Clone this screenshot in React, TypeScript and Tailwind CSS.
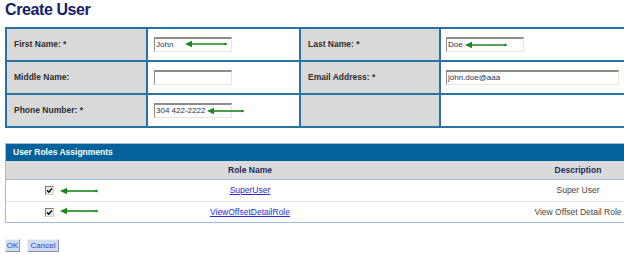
import { ReactElement } from "react"

type ArrowProps = { left: number; top: number; width: number }

// green annotation arrow pointing left, laid over the form
const Arrow = ({ left, top, width }: ArrowProps): ReactElement => (
  <svg
    className="absolute pointer-events-none"
    style={{ left, top }}
    width={width}
    height={8}
    viewBox={`0 0 ${width} 8`}
  >
    <line x1={5} y1={4} x2={width - 1.5} y2={4} stroke="#18881c" strokeWidth={1.6} />
    <polygon points="0,4 7,0.8 7,7.2" fill="#18881c" />
    <circle cx={width - 1.5} cy={4} r={1.3} fill="#18881c" />
  </svg>
)

const Label = ({ text }: { text: string }): ReactElement => (
  <div className="flex items-center h-[31px] bg-[#d9d9d9] pl-[7px] text-[8.5px] font-bold text-[#2e2e2e]">
    {text}
  </div>
)

const Field = ({ value, width }: { value: string; width: number }): ReactElement => (
  <div
    className="h-[15px] bg-white border border-[#e9e6da] border-t-2 border-t-[#8d8c85] border-l-[#8d8c85] pl-[1px] text-[8px] leading-[11px] text-[#2c2f52] overflow-visible whitespace-nowrap"
    style={{ width }}
  >
    {value}
  </div>
)

const Checkbox = (): ReactElement => (
  <span className="flex items-center justify-center w-[9px] h-[9px] border border-[#7a7a74] border-r-[#d8d6cc] border-b-[#d8d6cc] bg-[#ececE6]">
    <svg width="7" height="7" viewBox="0 0 7 7">
      <path d="M1 3.4 L2.8 5.2 L6 1.4" fill="none" stroke="#111" strokeWidth={1.5} />
    </svg>
  </span>
)

const App = (): ReactElement => {
  return (
    <div className="w-[624px] h-[255px] overflow-hidden bg-white font-['Liberation_Sans',Arial,sans-serif]">
      <h1 className="pl-[5px] h-[20px] text-[16px] leading-[20px] font-bold tracking-[-0.4px] text-[#14206a]">
        Create User
      </h1>

      <div className="ml-[5px] mt-[7px] w-[625px] grid grid-cols-[139px_151px_138px_1fr] gap-[2px] bg-[#2a72a3] p-[2px]">
        <Label text="First Name: *" />
        <div className="relative flex items-center h-[31px] bg-white pl-[6px]">
          <Field value="John" width={78} />
          <Arrow left={37} top={11} width={42} />
        </div>
        <Label text="Last Name: *" />
        <div className="relative flex items-center h-[31px] bg-white pl-[5px]">
          <Field value="Doe" width={78} />
          <Arrow left={24} top={12} width={42} />
        </div>

        <Label text="Middle Name:" />
        <div className="flex items-center h-[31px] bg-white pl-[6px]">
          <Field value="" width={78} />
        </div>
        <Label text="Email Address: *" />
        <div className="flex items-center h-[31px] bg-white pl-[5px]">
          <Field value="john.doe@aaa" width={173} />
        </div>

        <Label text="Phone Number: *" />
        <div className="relative flex items-center h-[31px] bg-white pl-[6px]">
          <Field value="304 422-2222" width={78} />
          <Arrow left={59} top={12} width={37} />
        </div>
        <div className="h-[31px] bg-[#d9d9d9]" />
        <div className="h-[31px] bg-white" />
      </div>

      <div className="ml-[5px] mt-[15px] w-[747px] border border-[#9cbcd9]">
        <div className="flex items-center h-[17px] bg-[#03619b] pl-[7px] text-[8.5px] font-bold text-white">
          User Roles Assignments
        </div>
        <div className="grid grid-cols-[89px_310px_1fr] h-[19px] items-center bg-[#dadada] border-b border-[#9cbcd9] text-[8.5px] font-bold text-[#1d2a5c]">
          <span />
          <span className="text-center">Role Name</span>
          <span className="text-center">Description</span>
        </div>
        <div className="grid grid-cols-[89px_310px_1fr] h-[22px] items-center border-b border-[#e2e2e2] text-[8.5px]">
          <div className="relative flex items-center h-full pl-[39px]">
            <Checkbox />
            <Arrow left={54} top={7} width={38} />
          </div>
          <a href="#" className="text-center text-[#2a2ad8] underline">SuperUser</a>
          <span className="text-center text-[#454545]">Super User</span>
        </div>
        <div className="grid grid-cols-[89px_310px_1fr] h-[20px] items-center text-[8.5px]">
          <div className="relative flex items-center h-full pl-[39px]">
            <Checkbox />
            <Arrow left={54} top={5} width={38} />
          </div>
          <a href="#" className="text-center text-[#2a2ad8] underline">ViewOffsetDetailRole</a>
          <span className="text-center text-[#454545]">View Offset Detail Role</span>
        </div>
      </div>

      <div className="flex gap-[7px] ml-[5px] mt-[16px]">
        <button className="w-[15px] h-[13px] flex items-center justify-center bg-[#cfdcf1] border border-[#eef3fb] border-r-[#8a94a6] border-b-[#8a94a6] text-[8px] text-[#2a46c8]">
          OK
        </button>
        <button className="w-[32px] h-[13px] flex items-center justify-center bg-[#cfdcf1] border border-[#eef3fb] border-r-[#8a94a6] border-b-[#8a94a6] text-[8px] text-[#2a46c8]">
          Cancel
        </button>
      </div>
    </div>
  )
}

export default App
